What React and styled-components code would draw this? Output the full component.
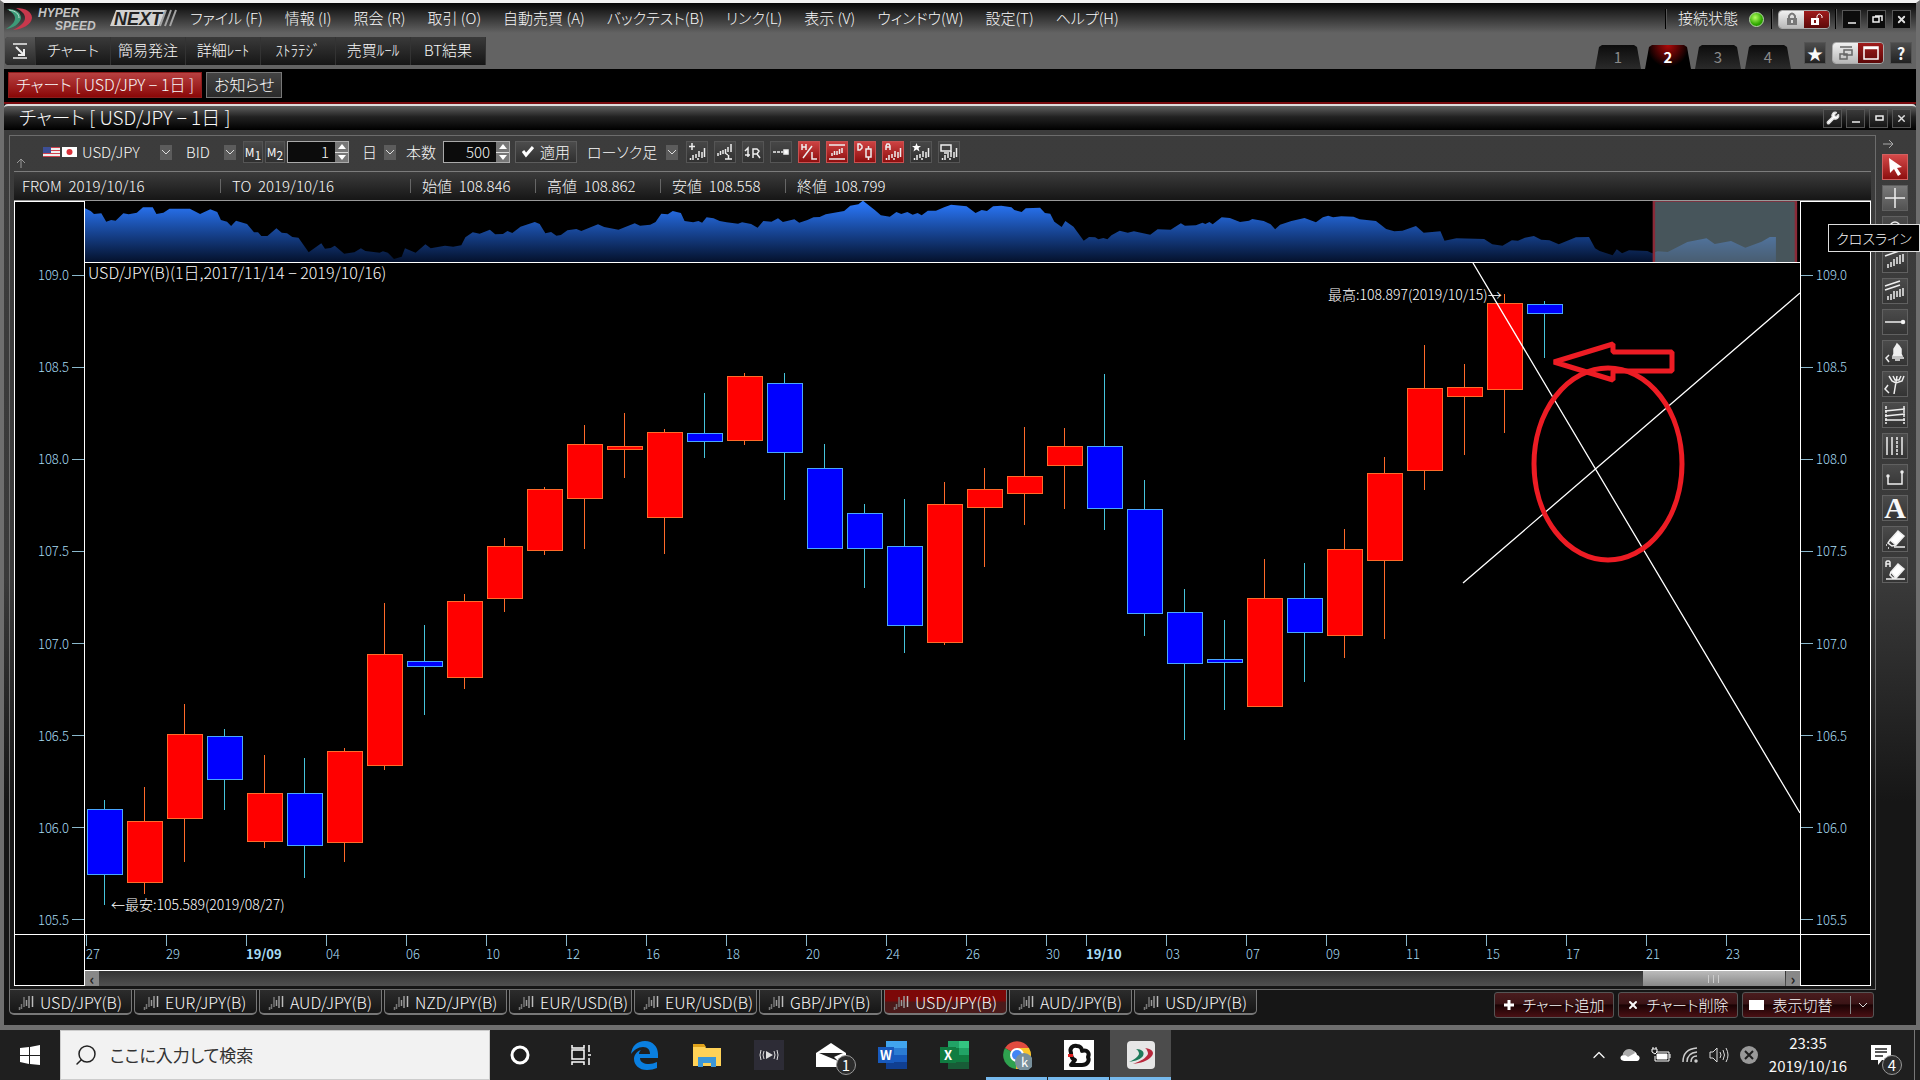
import React from "react";
import styled, { createGlobalStyle, css } from "styled-components";
import { Wrench, Search, ChevronUp, X } from "lucide-react";

const MENU = [
  "ファイル (F)",
  "情報 (I)",
  "照会 (R)",
  "取引 (O)",
  "自動売買 (A)",
  "バックテスト(B)",
  "リンク(L)",
  "表示 (V)",
  "ウィンドウ(W)",
  "設定(T)",
  "ヘルプ(H)",
];

const SHORTCUTS = ["チャート", "簡易発注", "詳細ﾚｰﾄ", "ｽﾄﾗﾃｼﾞ", "売買ﾙｰﾙ", "BT結果"];

const PRICES = ["109.0", "108.5", "108.0", "107.5", "107.0", "106.5", "106.0", "105.5"];

// [label, share of the axis]
const DATES = [
  ["27", 80],
  ["29", 80],
  ["19/09", 80],
  ["04", 80],
  ["06", 80],
  ["10", 80],
  ["12", 80],
  ["16", 80],
  ["18", 80],
  ["20", 80],
  ["24", 80],
  ["26", 80],
  ["30", 40],
  ["19/10", 80],
  ["03", 80],
  ["07", 80],
  ["09", 80],
  ["11", 80],
  ["15", 80],
  ["17", 80],
  ["21", 80],
  ["23", 74],
];

// [up?, body top, body bottom, high, low]
const CANDLES = [
  [0, 809, 874, 800, 904],
  [1, 821, 882, 787, 893],
  [1, 734, 818, 704, 861],
  [0, 736, 779, 729, 809],
  [1, 793, 841, 755, 847],
  [0, 793, 845, 758, 877],
  [1, 751, 842, 748, 861],
  [1, 654, 765, 603, 769],
  [0, 661, 666, 625, 714],
  [1, 601, 677, 594, 688],
  [1, 546, 598, 538, 611],
  [1, 489, 550, 487, 554],
  [1, 444, 498, 425, 548],
  [1, 446, 449, 413, 477],
  [1, 432, 517, 429, 553],
  [0, 433, 441, 393, 457],
  [1, 376, 440, 373, 444],
  [0, 383, 452, 373, 499],
  [0, 468, 548, 444, 548],
  [0, 513, 548, 504, 587],
  [0, 546, 625, 499, 652],
  [1, 504, 642, 482, 644],
  [1, 489, 507, 468, 566],
  [1, 476, 493, 427, 524],
  [1, 446, 465, 428, 508],
  [0, 446, 508, 374, 529],
  [0, 509, 613, 480, 635],
  [0, 612, 663, 589, 739],
  [0, 659, 662, 620, 709],
  [1, 598, 706, 559, 706],
  [0, 598, 632, 563, 681],
  [1, 549, 635, 529, 657],
  [1, 473, 560, 457, 638],
  [1, 388, 470, 345, 489],
  [1, 387, 396, 364, 454],
  [1, 303, 389, 294, 432],
  [0, 304, 313, 301, 357],
];

// rate history of the overview strip, three stretches of x,y pairs
const HISTORY = [
  "208,55 222,63 230,72 248,70 260,95 272,90 283,92 302,70 315,73 335,68 350,52 374,52 383,72 400,68 415,56 465,56 490,72 515,58 532,66 541,90 556,95 566,108 578,92 605,102 622,127 632,127 640,138 655,138 677,115 690,128 703,130 716,141 731,143 756,187 787,160 796,176 810,174 820,167 843,191 868,187 884,175 895,183 930,188 938,184 950,188 965,207 984,200 992,175 1018,188 1042,163 1055,175 1090,167 1110,170 1130,166 1140,142 1158,127 1175,131 1200,119 1213,133 1232,132 1243,123 1255,129 1275,110 1310,96 1322,102 1336,130 1350,126 1363,137 1374,135 1390,121 1412,117 1424,123 1465,103 1480,111 1515,119 1555,100",
  "0,107 25,104 38,96 52,71 68,73 80,63 100,69 109,93 130,97 143,93 152,98 163,82 180,85 195,93 212,97 240,101 250,97 272,102 288,113 302,93 322,95 338,85 350,96 378,88 390,98 410,90 425,82 440,81 455,73 500,63 515,47 535,43 546,32 575,60 590,76 612,80 628,66 640,72 655,66 668,74 680,69 690,76 705,62 725,62 745,52 762,44 800,49 822,69 837,60 850,63 865,49 885,47 910,52 917,60 935,66 945,55 980,53 992,69 1005,71 1015,95 1033,111 1042,93 1062,110 1087,152 1100,141 1115,142 1123,148 1135,144 1145,148 1155,136 1175,122 1195,128 1210,124 1250,134 1268,118 1300,119 1325,100 1335,107 1362,106 1378,98 1385,102 1395,96 1403,103 1425,82 1445,84 1470,96 1492,92 1500,87 1528,93 1545,103 1556,118",
  "0,104 28,93 60,84 88,97 105,82 118,77 130,82 150,79 180,80 195,88 235,93 260,117 280,124 300,122 333,108 352,128 393,124 403,152 432,145 500,147 520,163 545,167 568,151 583,152 600,143 622,138 640,149 660,151 683,163 725,142 757,141 772,175 783,183 815,196 825,178 838,190 855,181 900,183 912,190 925,184 950,186 998,156 1045,145 1065,162 1105,153 1140,173 1180,155 1200,141 1215,141 1215,216",
];

const historyPoints = HISTORY.map((part, i) =>
  part
    .split(" ")
    .map((p) => {
      const [x, y] = p.split(",").map(Number);
      return `${x + i * 1568},${y}`;
    })
    .join(" ")
).join(" ");

const PAIRS = [
  "USD/JPY(B)",
  "EUR/JPY(B)",
  "AUD/JPY(B)",
  "NZD/JPY(B)",
  "EUR/USD(B)",
  "EUR/USD(B)",
  "GBP/JPY(B)",
  "USD/JPY(B)",
  "AUD/JPY(B)",
  "USD/JPY(B)",
];

const bars = "M4.500 19v-2M7 19v-5M10 17v-4M13 16v-6M13 18h-2M16 17v-6M18.500 16V7";

const TOOLS = [
  { name: "指標追加", art: <><path d="M6 2v7M3 5.500h6" /><path d={bars} /></> },
  { name: "指標設定", art: <><path d="M4 15v-3M6.500 14v-4M9 13v-4M11.500 12V8M14 11V6M17 11V3" /><path d="M11 18h7M14.500 14v4M11 12l3 2" /></> },
  { name: "1R", art: <><path d="M3 10l3-3v9M3 14h5" /><path d="M11 17V8h4l2 2-2 3h-4M15 13l3 4" /></> },
  { name: "水平線", art: <><path d="M3 11h10" strokeDasharray="3 1" /><path d="M14 9h4v4h-4z" fill="#fff" /></> },
  { name: "H/L", on: true, art: <><path d="M4 3v6M8 3v6M4 6h4M5 17L14 5M14 11v7h5" /></> },
  { name: "上下限", on: true, art: <><path d="M3 4h16M3 18h16" /><path d="M6 15v-3M8.500 14v-4M11 14v-4M13.500 13V8M16 12V7" /></> },
  { name: "D", on: true, art: <><path d="M4 3h2l2 2v2l-2 2H4zM12 8h5v8h-5zM14.500 5v3M14.500 16v3" /></> },
  { name: "A", on: true, art: <><path d="M4 9V5l1-2h2l1 2v4M4 6h4" /><path d={bars} /></> },
  { name: "お気に入り", art: <><path d="M6.500 2l1.200 3H11L8.500 7l1 3.500-3-2-3 2 1-3.500L2 5h3.300z" fill="#fff" stroke="none" /><path d={bars} /></> },
  { name: "画面", art: <><path d="M3 4h10v6H3zM6 12h5" /><path d={bars} /></> },
];

const DRAW_TOOLS = [
  { name: "選択", on: true, art: <path d="M7 4l1 15 4-4 4 7 3-2-4-6 5-1z" fill="#fff" stroke="none" /> },
  { name: "クロスライン", lit: true, art: <path d="M13 3v20M3 13h20" /> },
  { name: "サークル", art: <circle cx="13" cy="11" r="5" /> },
  { name: "トレンドライン", art: <><path d="M3 9l17-6" /><path d="M6 21v-4M9 20v-5M12 19v-7M15 17v-7M18 17V8M21 15V7" /></> },
  { name: "平行線", art: <><path d="M3 8l15-5M3 12l15-5" /><path d="M6 22v-4M9 22v-6M12 21v-8M15 19v-6M18 19v-8M21 18v-8" /></> },
  { name: "水平", art: <><path d="M3 13h18" /><circle cx="21" cy="13" r="1.500" fill="#fff" /></> },
  { name: "アラート", art: <><path d="M11 16l1-2V9l2-3 1-2 2 2 2 3v5l1 2z" fill="#eee" /><path d="M10 18h12M13 20h5M7 15l-3 3 3 4" /></> },
  { name: "フォーク", art: <><path d="M7 5l3 5 4 2 6-2 2-5M11 5l2 4h4l2-4M15 5l-3 18M6 14l-3 4 4 4" /></> },
  { name: "チャネル", art: <><path d="M4 4v18M22 4v18" strokeDasharray="3 1" /><path d="M3 9l20-2M3 14l20-2M3 18h20" /></> },
  { name: "縦線", art: <><path d="M5 4v18M10 4v18M20 4v18" /><path d="M15 4v18" strokeDasharray="3 1" /></> },
  { name: "期間", art: <><path d="M6 12v8h14V8" /><circle cx="6" cy="12" r="1" fill="#fff" /><circle cx="20" cy="8" r="1" fill="#fff" /></> },
  { name: "テキスト", letter: "A" },
  { name: "消去", art: <><path d="M8 14l8-9 6 5-8 9z" fill="#fff" /><path d="M8 14l-2 3 4 3 4-1M12 21h11M4 19h1M6 22h1" /></> },
  { name: "全消去", art: <><path d="M9 15l7-8 6 5-8 9z" fill="#fff" /><path d="M9 15l-1 3 3 3h3M4 22h19M4 10V5l1-1h2l1 1v5M4 7h4" /></> },
];

const Flags = () => (
  <svg width="34" height="12" viewBox="0 0 34 12">
    <path d="M0 1h17v10H0z" fill="#eee" />
    <path d="M0 1.500h17M0 4.500h17M0 7.500h17M0 10.500h17" stroke="#d0414d" />
    <path d="M0 1h8v6H0z" fill="#3d4f96" />
    <path d="M19 1h15v10H19z" fill="#fff" />
    <circle cx="26.500" cy="6" r="3" fill="#d9313a" />
  </svg>
);

const Swoosh = () => (
  <svg width="30" height="28" viewBox="0 0 30 28">
    <path d="M3 4c8 0 14 3 14 9-1 6-8 10-15 11 6-4 9-7 9-11 0-3-3-6-8-9z" fill="#3c9a78" />
    <path d="M12 3c10 0 16 4 16 10-1 7-9 11-19 12 8-4 12-8 12-12 0-4-3-7-9-10z" fill="#c8384c" />
    <path d="M5 5c7 1 10 4 10 8" fill="none" stroke="#bfe0d2" />
  </svg>
);

const TabBars = () => (
  <svg width="16" height="16" viewBox="0 0 16 16" fill="none" strokeWidth="1.500">
    <path d="M1.500 16v-3M3.500 15v-5M6 13V3" stroke="#777" />
    <path d="M8.500 12V6M11 14V2" stroke="#999" />
    <path d="M14.500 13V2" stroke="#bbb" />
  </svg>
);

const Glyph = ({ size, children }) => (
  <svg width={size} height={size} viewBox={`0 0 ${size} ${size}`} fill="none" stroke="#eee" strokeWidth="1.500">
    {children}
  </svg>
);

function Dropdown({ label, value, width, gap }) {
  return (
    <SelectBox $width={width} $gap={gap}>
      <select aria-label={label}>
        <option>{value}</option>
      </select>
      <Caret>
        <svg width="8" height="5" viewBox="0 0 8 5" fill="none" stroke="#ddd">
          <path d="M0 0l4 4 4-4" />
        </svg>
      </Caret>
    </SelectBox>
  );
}

function Spinner({ label, value, width, gap }) {
  return (
    <SpinBox $width={width} $gap={gap}>
      <input type="text" aria-label={label} defaultValue={value} />
      <SpinButtons>
        <button type="button" aria-label="増やす">
          <svg width="8" height="5" viewBox="0 0 8 5"><path d="M0 5l4-5 4 5z" fill="#fff" /></svg>
        </button>
        <button type="button" aria-label="減らす">
          <svg width="8" height="5" viewBox="0 0 8 5"><path d="M0 0l4 5 4-5z" fill="#fff" /></svg>
        </button>
      </SpinButtons>
    </SpinBox>
  );
}

function Header() {
  return (
    <HeaderBox>
      <MenuRow>
        <Logo>
          <Swoosh />
          <svg width="146" height="32" viewBox="0 0 146 32">
            <text x="4" y="14" fontSize="12" fill="#c4c4c4" fontStyle="italic" fontWeight="700">HYPER</text>
            <text x="21" y="27" fontSize="12" fill="#c4c4c4" fontStyle="italic" fontWeight="700">SPEED</text>
            <path d="M82 7h50l-7 16H76z" fill="#d2d2d2" />
            <path d="M132 7l-6 16M137 7l-6 16M142 7l-6 16" stroke="#a4a4a4" strokeWidth="2" />
            <text x="80" y="22" fontSize="18" fill="#222" fontStyle="italic" fontWeight="700">NEXT</text>
          </svg>
        </Logo>
        <Menu>
          {MENU.map((m) => (
            <button type="button" key={m}>{m}</button>
          ))}
        </Menu>
        <Status>
          <Divider />
          <span>接続状態</span>
          <Led />
          <Divider />
          <Toggle>
            <button type="button" aria-label="ロック">
              <svg width="14" height="14" viewBox="0 0 14 14">
                <path d="M2 6h10v7H2z" fill="#777" />
                <path d="M4 6V4q3-5 6 0v2" fill="none" stroke="#777" strokeWidth="2" />
                <path d="M6 8h2v3H6z" fill="#ddd" />
              </svg>
            </button>
            <button type="button" aria-label="ロック解除">
              <svg width="14" height="14" viewBox="0 0 14 14">
                <path d="M1 6h8v7H1z" fill="#fff" />
                <path d="M7 6V4q2-4 5 0v2" fill="none" stroke="#fff" strokeWidth="1" />
                <path d="M4 8h2v3H4z" fill="#801010" />
              </svg>
            </button>
          </Toggle>
          <Divider />
          <WindowButtons $gap={6}>
            <WinButton type="button" aria-label="最小化"><Glyph size={12}><path d="M2 10h8" /></Glyph></WinButton>
            <WinButton type="button" aria-label="元に戻す"><Glyph size={12}><path d="M2 4h6v5H2zM4 3h7v5" /></Glyph></WinButton>
            <WinButton type="button" aria-label="閉じる"><X size={11} strokeWidth={4} /></WinButton>
          </WindowButtons>
        </Status>
      </MenuRow>
      <ShortcutRow>
        <Shortcuts>
          <ShortcutIcon type="button" aria-label="ツールバー">
            <Glyph size={18}><path d="M2 2h14M2 16h14" /><path d="M5 5l7 7M13 7v6H7" strokeWidth="2" /></Glyph>
          </ShortcutIcon>
          {SHORTCUTS.map((s) => (
            <button type="button" key={s}>{s}</button>
          ))}
        </Shortcuts>
        <Workspaces>
          {["1", "2", "3", "4"].map((n) => (
            <WorkspaceTab type="button" key={n} $on={n === "2"}>{n}</WorkspaceTab>
          ))}
        </Workspaces>
        <ViewButtons>
          <SquareButton type="button" aria-label="お気に入り">★</SquareButton>
          <Toggle $tall>
            <button type="button" aria-label="重ねて表示">
              <svg width="16" height="16" viewBox="0 0 16 16" fill="none" stroke="#666" strokeWidth="1.500">
                <path d="M2 2h12M6 5h8v5H6zM2 9h7v5H2z" />
              </svg>
            </button>
            <button type="button" aria-label="最大表示">
              <svg width="18" height="16" viewBox="0 0 18 16" fill="none" stroke="#fff" strokeWidth="1.500">
                <path d="M2 2h14v12H2zM2 3.500h14" />
              </svg>
            </button>
          </Toggle>
          <SquareButton type="button">?</SquareButton>
        </ViewButtons>
      </ShortcutRow>
    </HeaderBox>
  );
}

function ChartToolbar() {
  return (
    <ToolbarRow>
      <CornerArrow width="10" height="10" viewBox="0 0 10 10" fill="none" stroke="#999">
        <path d="M5 10V1M1 5l4-4 4 4" />
      </CornerArrow>
      <Flags />
      <Dropdown label="通貨ペア" value="USD/JPY" width={90} gap={5} />
      <Dropdown label="価格種別" value="BID" width={50} gap={14} />
      <MemoButton type="button" $gap={7}>M<sub>1</sub></MemoButton>
      <MemoButton type="button" $gap={2}>M<sub>2</sub></MemoButton>
      <Spinner label="足" value="1" width={62} gap={2} />
      <Dropdown label="足種" value="日" width={34} gap={13} />
      <CountLabel>本数</CountLabel>
      <Spinner label="本数" value="500" width={67} gap={7} />
      <ApplyButton type="button">
        <svg width="12" height="12" viewBox="0 0 12 12" fill="none" stroke="#fff" strokeWidth="3">
          <path d="M1 5l3 4 7-8" />
        </svg>
        適用
      </ApplyButton>
      <Dropdown label="チャート種別" value="ローソク足" width={91} gap={10} />
      <ToolButtons>
        {TOOLS.map((t) => (
          <ToolButton type="button" key={t.name} aria-label={t.name} $on={t.on}>
            <Glyph size={22}>{t.art}</Glyph>
          </ToolButton>
        ))}
      </ToolButtons>
    </ToolbarRow>
  );
}

function Axis({ side }) {
  return (
    <AxisColumn>
      <PriceList $side={side}>
        {PRICES.map((p) => (
          <li key={p}>{p}</li>
        ))}
      </PriceList>
      <AxisCorner />
    </AxisColumn>
  );
}

function Overview() {
  return (
    <OverviewBox>
      <svg viewBox="208 33 4202 183" preserveAspectRatio="none">
        <defs>
          <linearGradient id="rate" gradientUnits="userSpaceOnUse" x1="0" y1="33" x2="0" y2="216">
            <stop offset="0" stopColor="#2b7aff" />
            <stop offset="1" stopColor="#04112c" />
          </linearGradient>
        </defs>
        <polygon points={`208,216 ${historyPoints}`} fill="url(#rate)" />
        <rect x="4050" y="33" width="352" height="183" fill="#8eaab6" fillOpacity="0.5" />
        <path d="M4052 33v183M4400 33v183" stroke="#8a2a38" strokeWidth="6" />
        <path d="M4050 34h352" stroke="#8a2a38" strokeWidth="3" />
      </svg>
    </OverviewBox>
  );
}

function Plot() {
  return (
    <PlotBox>
      <PlotTitle>USD/JPY(B)(1日,2017/11/14 − 2019/10/16)</PlotTitle>
      <svg viewBox="85 263 1715 671">
        {CANDLES.map(([up, top, bottom, high, low], i) => {
          const x = 104 + i * 40;
          return (
            <g key={i} shapeRendering="crispEdges">
              <path d={`M${x + 0.5} ${high}V${low + 1}`} stroke={up ? "#ff6a2a" : "#45c4dc"} />
              <rect
                x={x - 16.5}
                y={top + 0.5}
                width="35"
                height={bottom - top}
                fill={up ? "#f00" : "#00f"}
                stroke={up ? "#ff6a2a" : "#49a6ff"}
              />
            </g>
          );
        })}
        <text x="1328" y="300" fontSize="14">最高:108.897(2019/10/15)→</text>
        <text x="111" y="910" fontSize="14">←最安:105.589(2019/08/27)</text>
        <path d="M1473 263L1800 813M1463 583L1800 293" stroke="#fff" strokeWidth="1.300" />
        <g fill="none" stroke="#ed1c24" strokeWidth="5">
          <ellipse cx="1608" cy="464" rx="74" ry="96" />
          <path d="M1554 362l59-18v8h59v19h-59v9z" strokeLinejoin="bevel" />
        </g>
      </svg>
    </PlotBox>
  );
}

function ChartWindow() {
  return (
    <>
      <TitleBar>
        <h1>チャート [ USD/JPY − 1日 ]</h1>
        <WindowButtons $gap={4}>
          <WinButton type="button" $flat aria-label="設定"><Wrench size={14} fill="#fff" /></WinButton>
          <WinButton type="button" $flat aria-label="最小化"><Glyph size={12}><path d="M2 10h8" /></Glyph></WinButton>
          <WinButton type="button" $flat aria-label="最大化"><Glyph size={12}><path d="M3 4h7v4H3z" /></Glyph></WinButton>
          <WinButton type="button" $flat aria-label="閉じる"><X size={11} strokeWidth={3} /></WinButton>
        </WindowButtons>
      </TitleBar>
      <WindowBody>
        <MainColumn>
          <Panel>
            <ChartToolbar />
            <Quotes>
              <li>FROM&nbsp; 2019/10/16</li>
              <li>TO&nbsp; 2019/10/16</li>
              <li>始値&nbsp; 108.846</li>
              <li>高値&nbsp; 108.862</li>
              <li>安値&nbsp; 108.558</li>
              <li>終値&nbsp; 108.799</li>
            </Quotes>
            <Chart>
              <Axis side="left" />
              <ChartCenter>
                <Overview />
                <Plot />
                <DateAxis>
                  {DATES.map(([d, share]) => (
                    <DateCell key={d} $share={share} $month={d.includes("/")}>{d}</DateCell>
                  ))}
                </DateAxis>
                <ScrollBar>
                  <button type="button" aria-label="左へ">‹</button>
                  <Thumb>
                    <svg width="14" height="8" viewBox="0 0 14 8" stroke="#ccc"><path d="M1.500 0v8M6.500 0v8M11.500 0v8" /></svg>
                  </Thumb>
                  <button type="button" aria-label="右へ">›</button>
                </ScrollBar>
              </ChartCenter>
              <Axis side="right" />
            </Chart>
          </Panel>
          <BottomRow>
            {PAIRS.map((p, i) => (
              <PairTab type="button" key={i} $on={i === 7}>
                <TabBars />
                {p}
              </PairTab>
            ))}
            <Actions>
              <ActionButton type="button">
                <svg width="12" height="12" viewBox="0 0 12 12" stroke="#fff" strokeWidth="3"><path d="M6 1v10M1 6h10" /></svg>
                チャート追加
              </ActionButton>
              <ActionButton type="button">
                <X size={12} strokeWidth={4} />
                チャート削除
              </ActionButton>
              <ActionButton type="button" $split>
                <svg width="16" height="12" viewBox="0 0 16 12"><path d="M0 1h15v10H0z" fill="#fff" /></svg>
                表示切替
                <SplitMark>
                  <svg width="8" height="5" viewBox="0 0 8 5" fill="none" stroke="#ddd"><path d="M0 0l4 4 4-4" /></svg>
                </SplitMark>
              </ActionButton>
            </Actions>
          </BottomRow>
        </MainColumn>
        <DrawBar>
          <svg width="12" height="10" viewBox="0 0 12 10" fill="none" stroke="#aaa"><path d="M1 5h10M7 1l4 4-4 4" /></svg>
          {DRAW_TOOLS.map((t) => (
            <DrawButton type="button" key={t.name} aria-label={t.name} $on={t.on} $lit={t.lit}>
              {t.letter || <Glyph size={26}>{t.art}</Glyph>}
              {t.lit && <Tooltip role="tooltip">{t.name}</Tooltip>}
            </DrawButton>
          ))}
        </DrawBar>
      </WindowBody>
    </>
  );
}

const APPS = [
  {
    name: "Cortana",
    art: <circle cx="14" cy="15" r="8" fill="none" stroke="#fff" strokeWidth="3" />,
  },
  {
    name: "タスクビュー",
    art: <path d="M4 5v3h12V5M4 10h12v9H4zM4 25v-3h12v3M21 5v7M21 18v7M20 15h3" fill="none" stroke="#fff" strokeWidth="1.500" />,
  },
  {
    name: "Edge",
    art: <path d="M1 14C2 6 7 1 15 1c8 0 13 6 13 13v4H10c0 4 4 6 9 6 3 0 5-1 8-2v6c-3 1-6 2-10 2C9 30 4 25 4 19c0-4 3-8 7-9-1 1-2 2-2 4h11c0-4-2-7-7-7-5 0-9 3-12 7z" fill="#0a7fe0" />,
  },
  {
    name: "エクスプローラー",
    art: (
      <>
        <path d="M1 5h11l2 3h15v18H1z" fill="#ffd257" />
        <path d="M1 4h11l2 3H1z" fill="#e0a21a" />
        <path d="M6 27V17h18v10h-5v-4h-8v4z" fill="#3b97d8" />
      </>
    ),
  },
  {
    name: "配信",
    art: (
      <>
        <path d="M0 0h30v30H0z" fill="#2d2c36" />
        <path d="M12 11l7 4-7 4z" fill="#ddd" />
        <path d="M10 11q-2 4 0 8M7 10q-2 5 0 10M20 11q2 4 0 8M23 10q2 5 0 10" fill="none" stroke="#ddd" />
      </>
    ),
  },
  {
    name: "メール",
    badge: "1",
    art: (
      <>
        <path d="M0 13L15 3l15 10v14H0z" fill="#fff" />
        <path d="M3 13h24l-9 4 4 4z" fill="#1f1f1f" />
      </>
    ),
  },
  {
    name: "Word",
    art: (
      <>
        <path d="M8 1h21v7H8z" fill="#41a5ee" />
        <path d="M8 8h21v7H8z" fill="#2b7cd3" />
        <path d="M8 15h21v7H8z" fill="#185abd" />
        <path d="M8 22h21v7H8z" fill="#103f91" />
        <path d="M0 7h16v16H0z" fill="#185abd" />
        <text x="2" y="20" fontSize="13" fontWeight="700" fill="#fff">W</text>
      </>
    ),
  },
  {
    name: "Excel",
    art: (
      <>
        <path d="M8 1h11v7H8z" fill="#21a366" />
        <path d="M19 1h10v7H19z" fill="#33c481" />
        <path d="M8 8h11v14H8z" fill="#107c41" />
        <path d="M19 8h10v7H19z" fill="#21a366" />
        <path d="M19 15h10v7H19z" fill="#107c41" />
        <path d="M8 22h21v7H8z" fill="#185c37" />
        <path d="M0 7h16v16H0z" fill="#107c41" />
        <text x="4" y="20" fontSize="13" fontWeight="700" fill="#fff">X</text>
      </>
    ),
  },
  {
    name: "Chrome",
    open: true,
    art: (
      <>
        <path d="M15 15L3 8A14 14 0 0 1 27 8z" fill="#e04b3f" />
        <path d="M15 15L3 8a14 14 0 0 0 11 21z" fill="#2fa14f" />
        <path d="M15 15l-1 14A14 14 0 0 0 27 8H15z" fill="#fbc62b" />
        <circle cx="15" cy="15" r="7" fill="#fff" />
        <circle cx="15" cy="15" r="5" fill="#4285f4" />
        <circle cx="22" cy="22" r="9" fill="#78909c" />
        <text x="19" y="27" fontSize="13" fill="#fff">k</text>
      </>
    ),
  },
  {
    name: "ビューア",
    open: true,
    art: (
      <>
        <path d="M0 0h30v30H0z" fill="#fff" />
        <path d="M7 13C5 8 9 5 13 6c3 0 5 2 5 5 5-2 8 2 6 6 2 4-1 8-6 8H7l4-5c-3-1-4-3-4-7z" fill="none" stroke="#111" strokeWidth="4" strokeLinejoin="round" />
        <path d="M4 14h5v3H4z" fill="#e02020" />
      </>
    ),
  },
  {
    name: "HYPER SPEED NEXT",
    open: true,
    active: true,
    art: (
      <>
        <rect x="1" y="1" width="28" height="28" rx="4" fill="#e6e6e6" />
        <path d="M10 9c6 0 9 3 7 7-2 3-7 5-14 6 6-3 9-5 10-8 0-2-1-4-3-5z" fill="#1e7a5a" />
        <path d="M19 8c8 1 10 5 6 9-4 4-10 6-18 7 8-3 13-6 15-10 0-2-1-5-3-6z" fill="#b8283c" />
      </>
    ),
  },
];

function Taskbar() {
  return (
    <TaskbarBox>
      <StartButton type="button" aria-label="スタート">
        <svg width="20" height="20" viewBox="0 0 20 20" fill="#fff">
          <path d="M0 3l9-1v8H0zM10 2l10-2v10H10zM0 11h9v8l-9-2zM10 11h10v9l-10-1z" />
        </svg>
      </StartButton>
      <SearchBox>
        <Search size={24} strokeWidth={1.5} />
        <input type="search" aria-label="検索" placeholder="ここに入力して検索" />
      </SearchBox>
      <AppList>
        {APPS.map((a) => (
          <AppButton type="button" key={a.name} aria-label={a.name} $open={a.open} $active={a.active}>
            <svg width="30" height="30" viewBox="0 0 30 30">{a.art}</svg>
            {a.badge && <Badge>{a.badge}</Badge>}
          </AppButton>
        ))}
      </AppList>
      <Tray>
        <TrayIcons>
          <ChevronUp size={20} strokeWidth={1.5} />
          <svg width="20" height="14" viewBox="0 0 20 14">
            <path d="M4 13C0 13-1 8 3 7c0-4 5-6 8-3 3-2 6 1 6 3 4 1 3 6 0 6z" fill="#fff" />
            <path d="M2 8c2-1 4-1 6 1l7-4c-2-5-9-5-11-1z" fill="#aaa" />
          </svg>
          <svg width="20" height="16" viewBox="0 0 20 16" fill="none" stroke="#fff">
            <path d="M5 5h13v9H4V9M19 7v4M1 2h5v3l-2 2-3-2zM2 0v2M5 0v2" />
            <path d="M6 7h10v5H6z" fill="#fff" />
          </svg>
          <svg width="16" height="18" viewBox="0 0 16 18" fill="none" stroke="#ccc" strokeWidth="1.500">
            <path d="M1 16Q1 3 15 2M5 16Q5 7 15 6M9 16q0-6 6-6" />
            <circle cx="14" cy="15" r="1" fill="#fff" />
          </svg>
          <svg width="20" height="16" viewBox="0 0 20 16" fill="none" stroke="#ddd">
            <path d="M1 5h3l4-4v14l-4-4H1zM11 5q2 3 0 6M14 3q3 5 0 10M17 1q4 7 0 14" />
          </svg>
          <svg width="18" height="18" viewBox="0 0 18 18">
            <circle cx="9" cy="9" r="9" fill="#999" />
            <path d="M5 5l8 8M13 5l-8 8" stroke="#1f1f1f" strokeWidth="2" />
          </svg>
        </TrayIcons>
        <Clock>
          <time>23:35</time>
          <time>2019/10/16</time>
        </Clock>
        <NoticeButton type="button" aria-label="通知">
          <svg width="20" height="20" viewBox="0 0 20 20">
            <path d="M0 0h20v15h-9l-4 5v-5H0z" fill="#fff" />
            <path d="M4 4h12M4 7h12M4 11h8" stroke="#222" strokeWidth="1.500" />
          </svg>
          <Badge>4</Badge>
        </NoticeButton>
        <ShowDesktop type="button" aria-label="デスクトップの表示" />
      </Tray>
    </TaskbarBox>
  );
}

export default function App() {
  return (
    <Screen>
      <GlobalStyle />
      <Window>
        <Header />
        <TabStrip>
          <WindowTab type="button" $on>チャート [ USD/JPY − 1日 ]</WindowTab>
          <WindowTab type="button">お知らせ</WindowTab>
        </TabStrip>
        <ChartWindow />
      </Window>
      <Taskbar />
    </Screen>
  );
}

const GlobalStyle = createGlobalStyle`
  * {
    box-sizing: border-box;
  }

  body {
    margin: 0;
    background: #000;
    color: #f8f8f8;
    font-family: "Noto Sans CJK JP", "Liberation Sans", sans-serif;
    font-size: 15px;
    font-weight: 300;
    font-feature-settings: "palt";
    line-height: 18px;
  }

  button, input, select {
    margin: 0;
    padding: 0;
    border: 0;
    background: none;
    color: inherit;
    font: inherit;
    font-feature-settings: inherit;
    white-space: nowrap;
  }

  ul {
    margin: 0;
    padding: 0;
    list-style: none;
  }

  svg {
    display: block;
    flex: none;
  }
`;

const center = css`
  display: flex;
  align-items: center;
  justify-content: center;
`;

const Screen = styled.div`
  display: flex;
  flex-direction: column;
  min-height: 100vh;
`;

const Window = styled.main`
  flex: 1;
  display: flex;
  flex-direction: column;
  border: 4px solid #6e6e6e;
  border-top: 3px solid #f4f4f4;
  border-bottom-width: 5px;
  background: #161616;
`;

const HeaderBox = styled.header`
  background: linear-gradient(#080808, #636363 30px);
`;

const MenuRow = styled.div`
  display: flex;
  align-items: center;
  height: 32px;
`;

const Logo = styled.div`
  display: flex;
  align-items: center;
  width: 186px;
  font-family: "Liberation Sans", sans-serif;
`;

const Menu = styled.nav`
  display: flex;
  gap: 22px;
  padding-bottom: 2px;
`;

const Status = styled.div`
  display: flex;
  align-items: center;
  gap: 5px;
  margin-left: auto;
  padding-right: 5px;

  span {
    margin-left: 6px;
    padding-bottom: 2px;
  }
`;

const Divider = styled.i`
  width: 2px;
  height: 20px;
  border-left: 1px solid #000;
  border-right: 1px solid #555;
`;

const Led = styled.i`
  width: 15px;
  height: 15px;
  margin: 0 2px 0 6px;
  border: 1px solid #b8dca8;
  border-radius: 50%;
  background: radial-gradient(circle at 40% 35%, #b4ff60, #2fa800 60%, #187000);
`;

const Toggle = styled.div`
  display: flex;
  height: ${(p) => (p.$tall ? 22 : 19)}px;
  border: 1px solid #aaa;
  border-radius: 4px;
  overflow: hidden;

  button {
    ${center}
    width: 25px;
    background: linear-gradient(#f0f0f0, #b8b8b8);
  }

  button + button {
    background: linear-gradient(#a01c1c, #5c0808);
  }
`;

const WindowButtons = styled.div`
  display: flex;
  gap: ${(p) => p.$gap}px;
`;

const WinButton = styled.button`
  ${center}
  width: 19px;
  height: 19px;
  border: 1px solid #555;
  background: ${(p) => (p.$flat ? "linear-gradient(#3a3a3a, #161616)" : "#0c0c0c")};
  color: #ddd;
`;

const ShortcutRow = styled.div`
  display: flex;
  align-items: flex-start;
  height: 34px;
  padding: 2px 4px 0 1px;
`;

const Shortcuts = styled.nav`
  display: flex;
  height: 28px;
  border-radius: 4px 0 0 4px;
  background: linear-gradient(#3a3a3a, #161616);

  button {
    width: 75px;
    padding-bottom: 2px;
    border-right: 1px solid #333;
  }
`;

const ShortcutIcon = styled.button`
  && {
    ${center}
    width: 31px;
    padding: 0;
    border-radius: 4px 0 0 4px;
    background: linear-gradient(#555, #2a2a2a);
  }
`;

const Workspaces = styled.div`
  display: flex;
  align-self: flex-end;
  gap: 4px;
  margin-left: auto;
`;

const WorkspaceTab = styled.button`
  width: 46px;
  height: 24px;
  clip-path: polygon(4px 2px, 7px 0, 39px 0, 42px 2px, 100% 100%, 0 100%);
  background: ${(p) =>
    p.$on
      ? "radial-gradient(ellipse at 50% 0, #b00808, #000 65%)"
      : "linear-gradient(#0c0c0c, #2a2a2a)"};
  color: ${(p) => (p.$on ? "#fff" : "#8a8a8a")};
  font-weight: ${(p) => (p.$on ? 700 : 400)};
`;

const ViewButtons = styled.div`
  display: flex;
  gap: 6px;
  margin: 5px 0 0 13px;
`;

const SquareButton = styled.button`
  ${center}
  width: 22px;
  height: 22px;
  border: 1px solid #555;
  background: linear-gradient(#4c4c4c, #222);
  font-size: 16px;
  font-weight: 700;
`;

const TabStrip = styled.nav`
  display: flex;
  gap: 4px;
  height: 35px;
  padding: 3px 4px;
  border-bottom: 2px solid #7a0c10;
  background: #000;
`;

const WindowTab = styled.button`
  height: 26px;
  padding: 0 7px 2px;
  border: 1px solid ${(p) => (p.$on ? "#8c1c1c" : "#777")};
  background: ${(p) =>
    p.$on ? "linear-gradient(#b84040, #8a0808)" : "linear-gradient(#444, #2a2a2a)"};
  font-size: 16px;
`;

const TitleBar = styled.div`
  display: flex;
  align-items: center;
  justify-content: space-between;
  height: 26px;
  padding: 0 5px 0 15px;
  border-top: 2px solid #ddd;
  border-radius: 4px 4px 0 0;
  background: linear-gradient(#606060, #222 45%, #000);

  h1 {
    margin: 0;
    padding-bottom: 2px;
    font-size: 19px;
    font-weight: 300;
  }
`;

const WindowBody = styled.div`
  flex: 1;
  display: flex;
  background: linear-gradient(#3c3c3c, #3a3a3a 50%, #161616 75%);
`;

const MainColumn = styled.div`
  flex: 1;
  display: flex;
  flex-direction: column;
  min-width: 0;
  padding: 5px 0 0 5px;
`;

const Panel = styled.section`
  flex: 1;
  display: flex;
  flex-direction: column;
  padding: 0 4px 3px;
  border: 1px solid #6c6c6c;
`;

const ToolbarRow = styled.div`
  display: flex;
  align-items: center;
  height: 35px;
  padding-bottom: 3px;
`;

const CornerArrow = styled.svg`
  align-self: flex-end;
  margin: 0 17px 0 2px;
`;

const SelectBox = styled.div`
  display: grid;
  grid-template-columns: 1fr 12px;
  align-items: center;
  width: ${(p) => p.$width}px;
  margin-left: ${(p) => p.$gap}px;

  select {
    grid-area: 1 / 1 / 2 / 3;
    appearance: none;
    outline: none;
  }
`;

const Caret = styled.span`
  ${center}
  grid-area: 1 / 2;
  height: 15px;
  background: #5c5c5c;
  pointer-events: none;
`;

const MemoButton = styled.button`
  width: 20px;
  height: 22px;
  margin-left: ${(p) => p.$gap}px;
  border: 1px solid #555;
  background: linear-gradient(#4a4a4a, #2e2e2e);
  font-size: 12px;
  font-weight: 400;
  line-height: 14px;

  sub {
    font-size: 12px;
    line-height: 0;
  }
`;

const SpinBox = styled.div`
  display: flex;
  width: ${(p) => p.$width}px;
  height: 22px;
  margin-left: ${(p) => p.$gap}px;
  border: 1px solid #aaa;

  input {
    flex: 1;
    min-width: 0;
    padding-right: 6px;
    background: #0c0c0c;
    text-align: right;
  }
`;

const SpinButtons = styled.div`
  display: grid;
  grid-template-rows: 1fr 1fr;
  gap: 1px;
  width: 13px;
  background: #ddd;

  button {
    ${center}
    background: #777;
  }
`;

const CountLabel = styled.span`
  margin-left: 10px;
`;

const ApplyButton = styled.button`
  ${center}
  gap: 6px;
  width: 62px;
  height: 22px;
  margin-left: 5px;
  border: 1px solid #5c5c5c;
  background: linear-gradient(#4c4c4c, #303030);
`;

const ToolButtons = styled.div`
  display: flex;
  gap: 6px;
  margin-left: 8px;
`;

const ToolButton = styled.button`
  ${center}
  width: 22px;
  height: 22px;
  overflow: hidden;
  box-shadow: inset 0 0 0 1px ${(p) => (p.$on ? "#c85050" : "#555")};
  background: ${(p) =>
    p.$on ? "linear-gradient(#d04444, #8a0c0c)" : "linear-gradient(#484848, #303030)"};
`;

const Quotes = styled.ul`
  display: flex;
  align-items: center;
  height: 30px;
  border-top: 1px solid #7c7c7c;
  border-bottom: 1px solid #999;
  background: linear-gradient(#3c3c3c, #161616);

  li {
    width: 125px;
    padding-left: 11px;
    border-left: 1px solid #666;
    line-height: 14px;
  }

  li:nth-child(1) {
    width: 206px;
    padding-left: 8px;
    border: 0;
  }

  li:nth-child(2) {
    width: 190px;
  }
`;

const Chart = styled.div`
  flex: 1;
  display: flex;
  background: #000;
`;

const AxisColumn = styled.div`
  display: flex;
  flex-direction: column;
  width: 71px;
  border: 1px solid #fff;
`;

const PriceList = styled.ul`
  flex: 1;
  display: flex;
  flex-direction: column;
  justify-content: space-between;
  padding: 64px 0 5px;
  color: #a8dcf4;
  font-size: 13px;

  li {
    display: flex;
    flex-direction: ${(p) => (p.$side === "left" ? "row" : "row-reverse")};
    justify-content: flex-end;
    align-items: center;
    gap: 3px;
  }

  li::after {
    content: "";
    width: 12px;
    height: 1px;
    background: #8ab8cc;
  }
`;

const AxisCorner = styled.div`
  height: 51px;
  border-top: 1px solid #fff;
`;

const ChartCenter = styled.div`
  flex: 1;
  display: flex;
  flex-direction: column;
  min-width: 0;
`;

const OverviewBox = styled.div`
  height: 62px;
  border-bottom: 1px solid #fff;

  svg {
    width: 100%;
    height: 100%;
  }
`;

const PlotBox = styled.div`
  position: relative;
  flex: 1;

  svg {
    width: 100%;
    fill: #fff;
  }
`;

const PlotTitle = styled.span`
  position: absolute;
  top: 0;
  left: 3px;
  font-size: 16px;
`;

const DateAxis = styled.div`
  display: flex;
  height: 37px;
  padding-left: 1px;
  border-top: 1px solid #fff;
  border-bottom: 1px solid #fff;
  color: #a8dcf4;
  font-size: 13px;
  line-height: 16px;
`;

const DateCell = styled.span`
  flex: ${(p) => p.$share} 0 0;
  min-width: 0;
  font-weight: ${(p) => (p.$month ? 700 : 300)};
  white-space: nowrap;

  &::before {
    content: "";
    display: block;
    width: 1px;
    height: 11px;
    background: #8ab8cc;
  }
`;

const ScrollBar = styled.div`
  display: flex;
  height: 15px;
  background: linear-gradient(#333, #505050);

  button {
    width: 14px;
    background: #888;
    color: #222;
    font-weight: 700;
    line-height: 12px;
  }
`;

const Thumb = styled.div`
  ${center}
  width: 142px;
  margin-left: auto;
  margin-right: 1px;
  background: linear-gradient(#bbb, #888);
`;

const BottomRow = styled.div`
  display: flex;
  gap: 2px;
  height: 35px;
`;

const PairTab = styled.button`
  display: flex;
  align-items: center;
  gap: 6px;
  width: 123px;
  height: 25px;
  padding-left: 8px;
  border: 1px solid #777;
  border-top: 0;
  border-bottom-width: 2px;
  border-radius: 0 0 5px 5px;
  background: ${(p) =>
    p.$on ? "linear-gradient(#7c0808 45%, #4a1a1a 55%)" : "linear-gradient(#2c2c2c, #161616)"};
  font-size: 16px;
`;

const Actions = styled.div`
  display: flex;
  gap: 4px;
  margin: 2px 2px 0 auto;
`;

const ActionButton = styled.button`
  ${center}
  gap: 7px;
  width: ${(p) => (p.$split ? 132 : 120)}px;
  height: 26px;
  border: 1px solid #555;
  border-radius: 3px;
  background: linear-gradient(#4a1c1e, #3a1416 45%, #1a0304 50%, #4a1014);
`;

const SplitMark = styled.span`
  ${center}
  height: 18px;
  margin-left: 10px;
  padding-left: 8px;
  border-left: 1px solid #888;
`;

const DrawBar = styled.aside`
  display: flex;
  flex-direction: column;
  align-items: flex-start;
  gap: 5px;
  width: 40px;
  padding: 9px 0 0 6px;
`;

const DrawButton = styled.button`
  ${center}
  position: relative;
  width: 26px;
  height: 26px;
  box-shadow: inset 0 0 0 1px ${(p) => (p.$on ? "#d06060" : "#606060")};
  background: ${(p) =>
    p.$on
      ? "linear-gradient(#d84c4c, #8a0c0c)"
      : p.$lit
      ? "linear-gradient(#7c7c7c, #505050)"
      : "linear-gradient(#4c4c4c, #333)"};
  font-family: "Liberation Serif", serif;
  font-size: 30px;
  font-weight: 700;
`;

const Tooltip = styled.span`
  position: absolute;
  z-index: 1;
  top: 39px;
  right: -12px;
  width: 92px;
  padding: 4px 0;
  border: 1px solid #ddd;
  background: #000;
  font-family: "Noto Sans CJK JP", sans-serif;
  font-size: 14px;
  font-weight: 300;
  text-align: center;
`;

const TaskbarBox = styled.footer`
  display: flex;
  height: 50px;
  background: #1f1f1f;
  font-weight: 400;
`;

const StartButton = styled.button`
  ${center}
  width: 60px;
`;

const SearchBox = styled.label`
  display: flex;
  align-items: center;
  gap: 12px;
  width: 430px;
  padding-left: 13px;
  border: 1px solid #ccc;
  background: #f2f2f2;
  color: #222;

  svg {
    transform: scaleX(-1);
  }

  input {
    flex: 1;
    outline: none;
    font-size: 17px;
  }

  input::placeholder {
    color: #333;
    opacity: 1;
  }
`;

const AppList = styled.div`
  display: flex;
  gap: 1px;
`;

const AppButton = styled.button`
  ${center}
  position: relative;
  width: 61px;
  background: ${(p) => (p.$active ? "#4c4c4c" : "none")};
  box-shadow: ${(p) => (p.$open ? "inset 0 -3px #76b9ed" : "none")};
`;

const Badge = styled.span`
  ${center}
  position: absolute;
  right: 5px;
  bottom: 5px;
  width: 20px;
  height: 20px;
  border: 1px solid #999;
  border-radius: 50%;
  background: #2c2c2c;
  color: #fff;
`;

const Tray = styled.div`
  display: flex;
  align-items: center;
  margin-left: auto;
`;

const TrayIcons = styled.div`
  display: flex;
  align-items: center;
  gap: 11px;
  margin-right: 10px;
`;

const Clock = styled.div`
  display: flex;
  flex-direction: column;
  align-items: center;
  gap: 5px;
  width: 80px;
  padding-bottom: 2px;
`;

const NoticeButton = styled.button`
  ${center}
  position: relative;
  width: 52px;
  height: 50px;
  margin: 0 7px;
`;

const ShowDesktop = styled.button`
  width: 6px;
  height: 50px;
  border-left: 1px solid #777;
`;
